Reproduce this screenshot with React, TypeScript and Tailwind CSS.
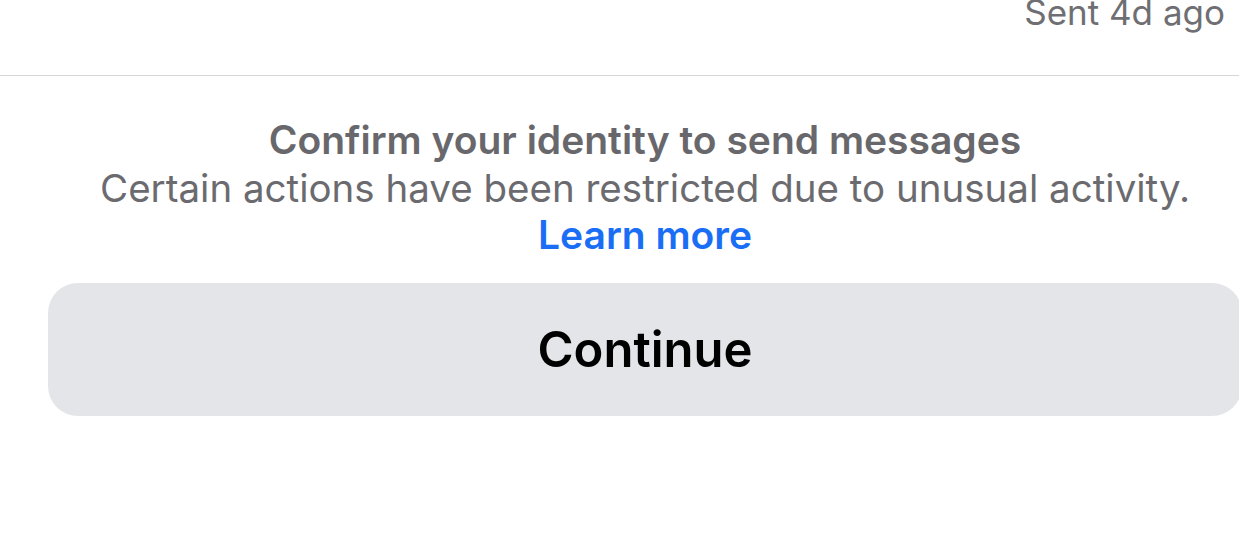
export default function App() {
  return (
    <div className="relative h-[542px] w-full overflow-hidden bg-white font-['Inter','Noto_Sans',sans-serif]">
      {/* last message meta */}
      <div className="flex h-[76px] flex-col border-b border-[#d6d6d8]">
        <div className="-mt-[5px] flex justify-end pr-[14px] text-[35px] leading-[35px] text-[#6f6f73]">
          Sent 4d ago
        </div>
      </div>

      {/* restriction notice */}
      <div className="ml-[48px] w-[1194px] pt-[40px]">
        <div className="flex flex-col items-center text-center">
          <h2 className="text-[39px] font-semibold leading-[48px] text-[#68686c]">
            Confirm your identity to send messages
          </h2>
          <p className="text-[38.5px] leading-[49px] text-[#6b6b6f]">
            Certain actions have been restricted due to unusual activity.
          </p>
          <a href="#" className="text-[39px] font-semibold leading-[44px] text-[#1a6ef5]">
            Learn more
          </a>
        </div>

        <button className="mt-[26px] flex h-[133px] w-full items-center justify-center rounded-[30px] bg-[#e4e5e9] text-[49px] font-semibold text-black">
          Continue
        </button>
      </div>
    </div>
  );
}
